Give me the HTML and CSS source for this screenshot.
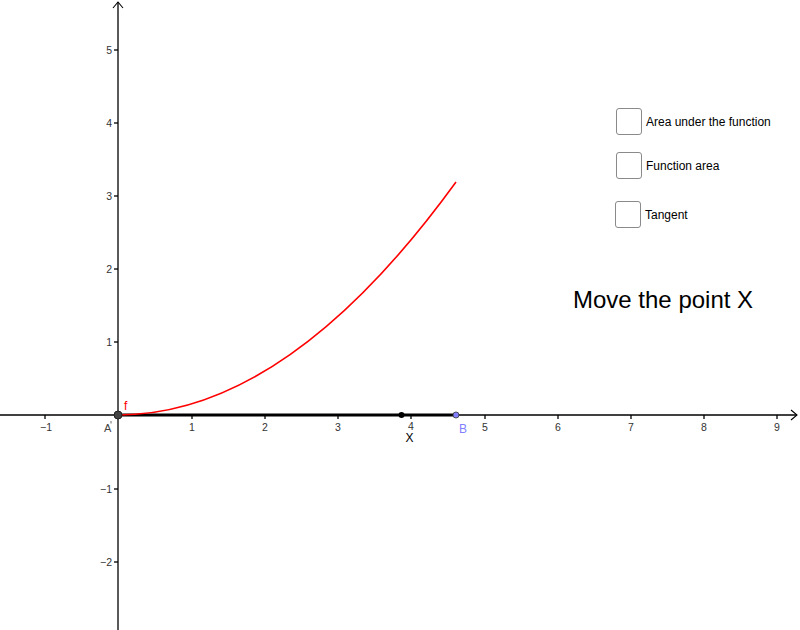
FILE: index.html
```html
<!DOCTYPE html>
<html>
<head>
<meta charset="utf-8">
<link rel="stylesheet" href="styles.css">
</head>
<body>
<div class="app">
  <svg class="graph" width="800" height="630" viewBox="0 0 800 630">
    <g class="axes">
      <line x1="0" y1="415" x2="797" y2="415"/>
      <polyline class="arrow" points="791,410 797,415 791,420"/>
      <line x1="118" y1="630" x2="118" y2="2"/>
      <polyline class="arrow" points="113,8 118,2 123,8"/>
      <!-- x ticks -->
      <line x1="45" y1="415" x2="45" y2="419"/>
      <line x1="192" y1="415" x2="192" y2="419"/>
      <line x1="265" y1="415" x2="265" y2="419"/>
      <line x1="338" y1="415" x2="338" y2="419"/>
      <line x1="411" y1="415" x2="411" y2="419"/>
      <line x1="485" y1="415" x2="485" y2="419"/>
      <line x1="558" y1="415" x2="558" y2="419"/>
      <line x1="631" y1="415" x2="631" y2="419"/>
      <line x1="704" y1="415" x2="704" y2="419"/>
      <line x1="777" y1="415" x2="777" y2="419"/>
      <!-- y ticks -->
      <line x1="114" y1="50" x2="118" y2="50"/>
      <line x1="114" y1="123" x2="118" y2="123"/>
      <line x1="114" y1="196" x2="118" y2="196"/>
      <line x1="114" y1="269" x2="118" y2="269"/>
      <line x1="114" y1="342" x2="118" y2="342"/>
      <line x1="114" y1="489" x2="118" y2="489"/>
      <line x1="114" y1="562" x2="118" y2="562"/>
    </g>
    <g class="ticklabels xl">
      <text x="46" y="431">−1</text>
      <text x="192" y="431">1</text>
      <text x="265" y="431">2</text>
      <text x="338" y="431">3</text>
      <text x="411" y="430">4</text>
      <text x="485" y="431">5</text>
      <text x="558" y="431">6</text>
      <text x="631" y="431">7</text>
      <text x="704" y="431">8</text>
      <text x="777" y="431">9</text>
    </g>
    <g class="ticklabels yl">
      <text x="112" y="54">5</text>
      <text x="112" y="127">4</text>
      <text x="112" y="200">3</text>
      <text x="112" y="273">2</text>
      <text x="112" y="346">1</text>
      <text x="112" y="493">−1</text>
      <text x="112" y="566">−2</text>
    </g>
    <line class="seg" x1="118" y1="415" x2="456" y2="415"/>
    <path class="curve" d="M118 415 Q287 415 456 182"/>
    <text class="lab-f" x="124" y="410">f</text>
    <circle class="pt-a" cx="118" cy="415" r="4"/>
    <circle class="pt-x" cx="401.5" cy="415" r="3"/>
    <circle class="pt-b" cx="456" cy="415" r="3"/>
    <text class="lab-a" x="104" y="432">A</text>
    <line class="lab-a-mark" x1="111" y1="421" x2="111" y2="423.5"/>
    <text class="lab-x" x="409.5" y="442">X</text>
    <text class="lab-b" x="459" y="433">B</text>
  </svg>

  <div class="checks">
    <label class="check c1"><span class="box"></span><span class="txt">Area under the function</span></label>
    <label class="check c2"><span class="box"></span><span class="txt">Function area</span></label>
    <label class="check c3"><span class="box"></span><span class="txt">Tangent</span></label>
  </div>

  <div class="hint">Move the point X</div>
</div>
</body>
</html>
```

FILE: styles.css
```css
html, body {
  margin: 0;
  padding: 0;
  background: #ffffff;
}
.app {
  position: relative;
  width: 800px;
  height: 630px;
  overflow: hidden;
  font-family: "Liberation Sans", Arial, sans-serif;
}
.graph {
  position: absolute;
  left: 0;
  top: 0;
}
.axes line,
.axes polyline {
  stroke: #000;
  stroke-width: 1.3;
  fill: none;
}
.axes .arrow {
  stroke-width: 1.1;
}
.ticklabels text {
  font-family: "Liberation Sans", Arial, sans-serif;
  font-size: 10.5px;
  fill: #333;
}
.xl text { text-anchor: middle; }
.yl text { text-anchor: end; }
.seg {
  stroke: #000;
  stroke-width: 3;
}
.curve {
  stroke: #ff0000;
  stroke-width: 1.6;
  fill: none;
}
.lab-f {
  font-size: 12px;
  fill: #ff0000;
}
.pt-a {
  fill: #444;
  stroke: #222;
  stroke-width: 1;
}
.pt-x {
  fill: #000;
}
.pt-b {
  fill: #7f7fff;
  stroke: #333;
  stroke-width: 0.8;
}
.lab-a {
  font-size: 11px;
  fill: #444;
}
.lab-a-mark {
  stroke: #444;
  stroke-width: 0.8;
}
.lab-x {
  font-size: 12px;
  fill: #000;
  text-anchor: middle;
}
.lab-b {
  font-size: 12px;
  fill: #7f7fff;
}
.checks {
  position: absolute;
  left: 615px;
  top: 108px;
  display: flex;
  flex-direction: column;
}
.check {
  display: flex;
  align-items: center;
  gap: 4px;
  font-size: 12px;
  color: #000;
}
.c2 { margin-top: 17px; margin-left: 1px; }
.c3 { margin-top: 22px; }
.c1 { margin-left: 1px; }
.box {
  display: block;
  width: 24px;
  height: 25px;
  border: 1px solid #8a8a8a;
  border-radius: 3px;
  background: #fff;
}
.hint {
  position: absolute;
  left: 573px;
  top: 286px;
  font-size: 24px;
  color: #000;
}
```
